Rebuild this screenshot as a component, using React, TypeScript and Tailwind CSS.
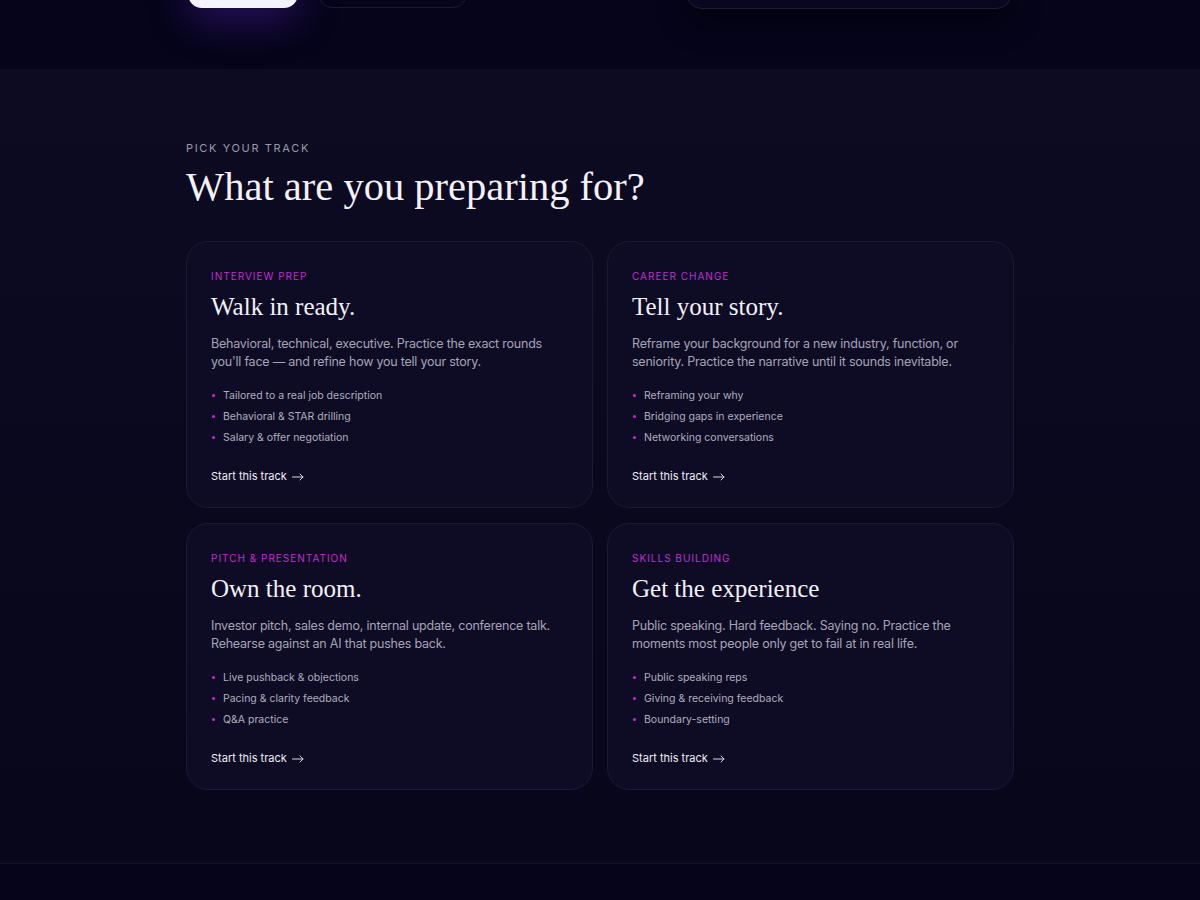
import React from "react";

type Track = {
  label: string;
  title: string;
  body: string;
  bullets: string[];
};

const tracks: Track[] = [
  {
    label: "Interview prep",
    title: "Walk in ready.",
    body: "Behavioral, technical, executive. Practice the exact rounds you'll face — and refine how you tell your story.",
    bullets: ["Tailored to a real job description", "Behavioral & STAR drilling", "Salary & offer negotiation"],
  },
  {
    label: "Career change",
    title: "Tell your story.",
    body: "Reframe your background for a new industry, function, or seniority. Practice the narrative until it sounds inevitable.",
    bullets: ["Reframing your why", "Bridging gaps in experience", "Networking conversations"],
  },
  {
    label: "Pitch & presentation",
    title: "Own the room.",
    body: "Investor pitch, sales demo, internal update, conference talk. Rehearse against an AI that pushes back.",
    bullets: ["Live pushback & objections", "Pacing & clarity feedback", "Q&A practice"],
  },
  {
    label: "Skills building",
    title: "Get the experience",
    body: "Public speaking. Hard feedback. Saying no. Practice the moments most people only get to fail at in real life.",
    bullets: ["Public speaking reps", "Giving & receiving feedback", "Boundary-setting"],
  },
];

const sans = { fontFamily: "Inter, 'Noto Sans', sans-serif" };
const serif = { fontFamily: "'Liberation Serif', 'Times New Roman', serif" };

function Card({ t }: { t: Track }) {
  return (
    <div className="rounded-[22px] border border-[#1b1934] bg-[#0e0c25] px-6 pt-[26px] pb-[21px]">
      <div className="text-[10px] leading-4 uppercase tracking-[0.1em] text-[#c42bd0]">{t.label}</div>
      <h3 className="mt-[7px] text-[25px] leading-8 text-[#f3f1f8]" style={serif}>
        {t.title}
      </h3>
      <p className="mt-[12px] text-[12.5px] leading-[18px] tracking-[-0.018em] text-[#a6a3b6]">{t.body}</p>
      <ul className="mt-[14px] flex flex-col">
        {t.bullets.map((b) => (
          <li key={b} className="flex items-center text-[10.5px] leading-[21px] text-[#b0adbf]">
            <span className="ml-[1px] mr-[8px] h-[3px] w-[3px] rounded-full bg-[#d026e0]" />
            {b}
          </li>
        ))}
      </ul>
      <div className="mt-[18px] flex items-center gap-[5px] text-[11px] leading-5 text-[#eeedf4]">
        <span>Start this track</span>
        <svg width="12" height="8" viewBox="0 0 12 8" fill="none" className="mt-[1px]">
          <path d="M0.5 4H11M8 1L11 4L8 7" stroke="#d8d6e2" strokeWidth="1" strokeLinecap="round" strokeLinejoin="round" />
        </svg>
      </div>
    </div>
  );
}

export default function App() {
  return (
    <div className="min-h-[900px] bg-[#05041a]" style={sans}>
      {/* hero bottom */}
      <div className="h-[69px] overflow-hidden bg-[#05041a]">
        <div className="mx-auto -mt-[39px] flex w-[828px] items-start">
          <div className="ml-[2px] h-[47px] w-[110px] rounded-[14px] bg-[#f3f4fd] shadow-[0_12px_40px_rgba(110,40,220,0.35)]" />
          <div className="ml-[20px] h-[47px] w-[149px] rounded-[14px] border border-[#1c1a30]" />
          <div className="ml-auto mr-[2px] h-[48px] w-[326px] rounded-[16px] border border-[#1f1d33] bg-[#090720] shadow-[0_14px_30px_rgba(0,0,0,0.45)]" />
        </div>
      </div>

      {/* tracks section */}
      <section className="bg-gradient-to-b from-[#0d0b22] to-[#08061a] pt-[71px] pb-[73px]">
        <div className="mx-auto w-[828px]">
          <div className="text-[11px] leading-4 uppercase tracking-[0.15em] text-[#9b98aa]">Pick your track</div>
          <h2 className="mt-[9px] text-[40.5px] leading-[44px] text-[#f4f2f8]" style={serif}>
            What are you preparing for?
          </h2>
          <div className="mt-[32px] grid grid-cols-2 gap-x-[14px] gap-y-[15px]">
            {tracks.map((t) => (
              <Card key={t.label} t={t} />
            ))}
          </div>
        </div>
      </section>

      {/* footer */}
      <footer className="h-[37px] border-t border-[#15132b] bg-[#05041a]" />
    </div>
  );
}
